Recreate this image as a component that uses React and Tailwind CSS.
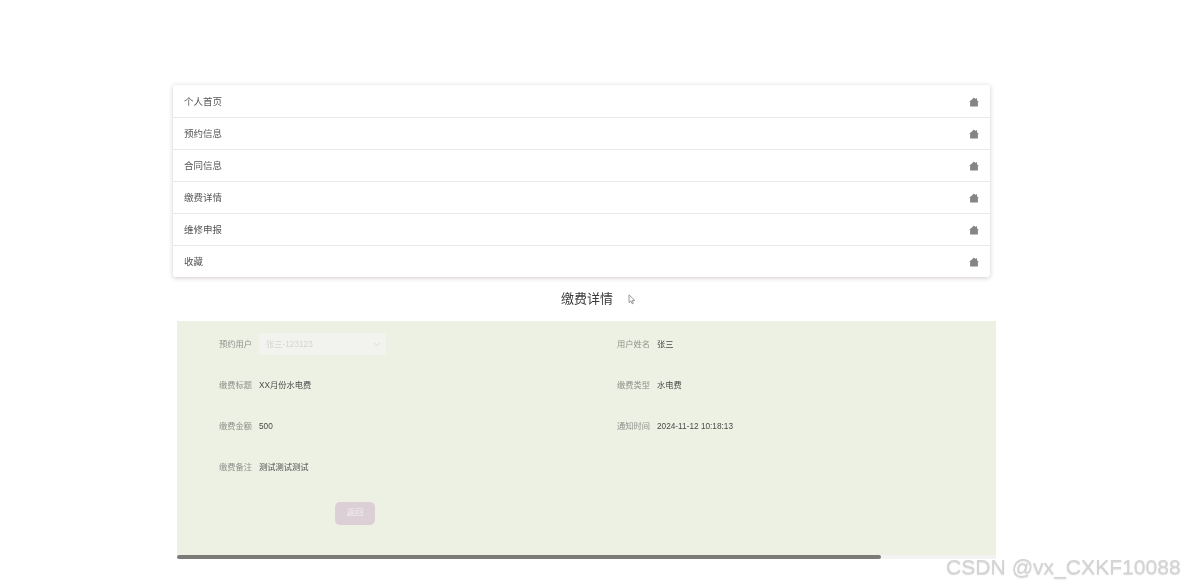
const FONT = "font-['Liberation_Sans','Noto_Sans_CJK_SC',sans-serif]";

const menu = ["个人首页", "预约信息", "合同信息", "缴费详情", "维修申报", "收藏"];

function Home() {
  return (
    <svg width="10" height="10" viewBox="0 0 10 10" className="shrink-0">
      <path d="M5 0.6 L6.8 2.2 V1.2 H8 V3.3 L9.8 5.1 H8.9 V9.4 H1.1 V5.1 H0.2 Z" fill="#858585" />
    </svg>
  );
}

function Label({ children }) {
  return <span className="w-[33px] shrink-0 translate-y-px whitespace-nowrap text-[8.25px] leading-[22px] text-[#8f918c]">{children}</span>;
}

function Value({ children }) {
  return <span className="translate-y-px whitespace-nowrap text-[8.25px] leading-[22px] text-[#4a4a4a]">{children}</span>;
}

function Field({ label, children }) {
  return (
    <div className="flex h-[22px] items-center gap-[7px]">
      <Label>{label}</Label>
      {children}
    </div>
  );
}

export default function App() {
  return (
    <div className={`${FONT} relative h-[587px] w-[1185px] overflow-hidden bg-white pt-[85px] blur-[0.4px]`}>
      <div className="ml-[173px] w-[817px] rounded-[3px] bg-white pt-px shadow-[0_1px_5px_rgba(90,70,80,0.28)]">
        {menu.map((m, i) => (
          <div
            key={m}
            className={`flex items-center justify-between pl-[11px] pr-[11.5px] pt-[1px] text-[9.5px] text-[#555555] ${i < menu.length - 1 ? "h-[32px] border-b border-[#e8e8e8]" : "h-[31px]"}`}
          >
            <span>{m}</span>
            <Home />
          </div>
        ))}
      </div>

      <div className="relative ml-[173px] flex h-[44px] w-[828px] items-center justify-center text-[13px] text-[#3a3a3a]">
        缴费详情
        <svg width="8" height="11" viewBox="0 0 8 11" className="absolute left-[455px] top-[17px]">
          <path d="M1 0.8 V8.6 L2.9 6.9 L4.2 9.8 L5.4 9.3 L4.2 6.5 L6.8 6.4 Z" fill="#fff" stroke="#6f6f6f" strokeWidth="0.7" />
        </svg>
      </div>

      <div className="ml-[177px] w-[819px]">
        <div className="h-[234px] bg-[#edf1e3] pl-[42px] pt-[12px]">
          <div className="grid grid-cols-[398px_1fr] gap-y-[19px]">
            <Field label="预约用户">
              <div className="flex h-[22px] w-[127px] items-center justify-between rounded-[3px] bg-[#f2f3ef] pl-[7px] pr-[5px] text-[8.25px] text-[#d3d5d1]">
                <span className="translate-y-px">张三-123123</span>
                <svg width="8" height="8" viewBox="0 0 8 8">
                  <path d="M1 2.8 L4 5.6 L7 2.8" fill="none" stroke="#d4d6d2" strokeWidth="0.8" />
                </svg>
              </div>
            </Field>
            <Field label="用户姓名"><Value>张三</Value></Field>
            <Field label="缴费标题"><Value>XX月份水电费</Value></Field>
            <Field label="缴费类型"><Value>水电费</Value></Field>
            <Field label="缴费金额"><Value>500</Value></Field>
            <Field label="通知时间"><Value>2024-11-12 10:18:13</Value></Field>
            <Field label="缴费备注"><Value>测试测试测试</Value></Field>
          </div>
          <button className="ml-[116px] mt-[24px] block h-[23px] w-[40px] rounded-[5px] bg-[#dcd0d6] text-[8.25px] text-[#f3eff1]">
            返回
          </button>
        </div>
        <div className="h-[4px] bg-[#f3f3f3]">
          <div className="h-[4px] w-[704px] rounded-full bg-[#7b7b78]" />
        </div>
      </div>

      <div className="absolute left-[946px] top-[553px] text-[21.1px] leading-[28px] whitespace-nowrap text-[#d4d4d4] [text-shadow:0_1px_1px_rgba(120,120,120,0.3)]">
        CSDN @vx_CXKF10088
      </div>
    </div>
  );
}
